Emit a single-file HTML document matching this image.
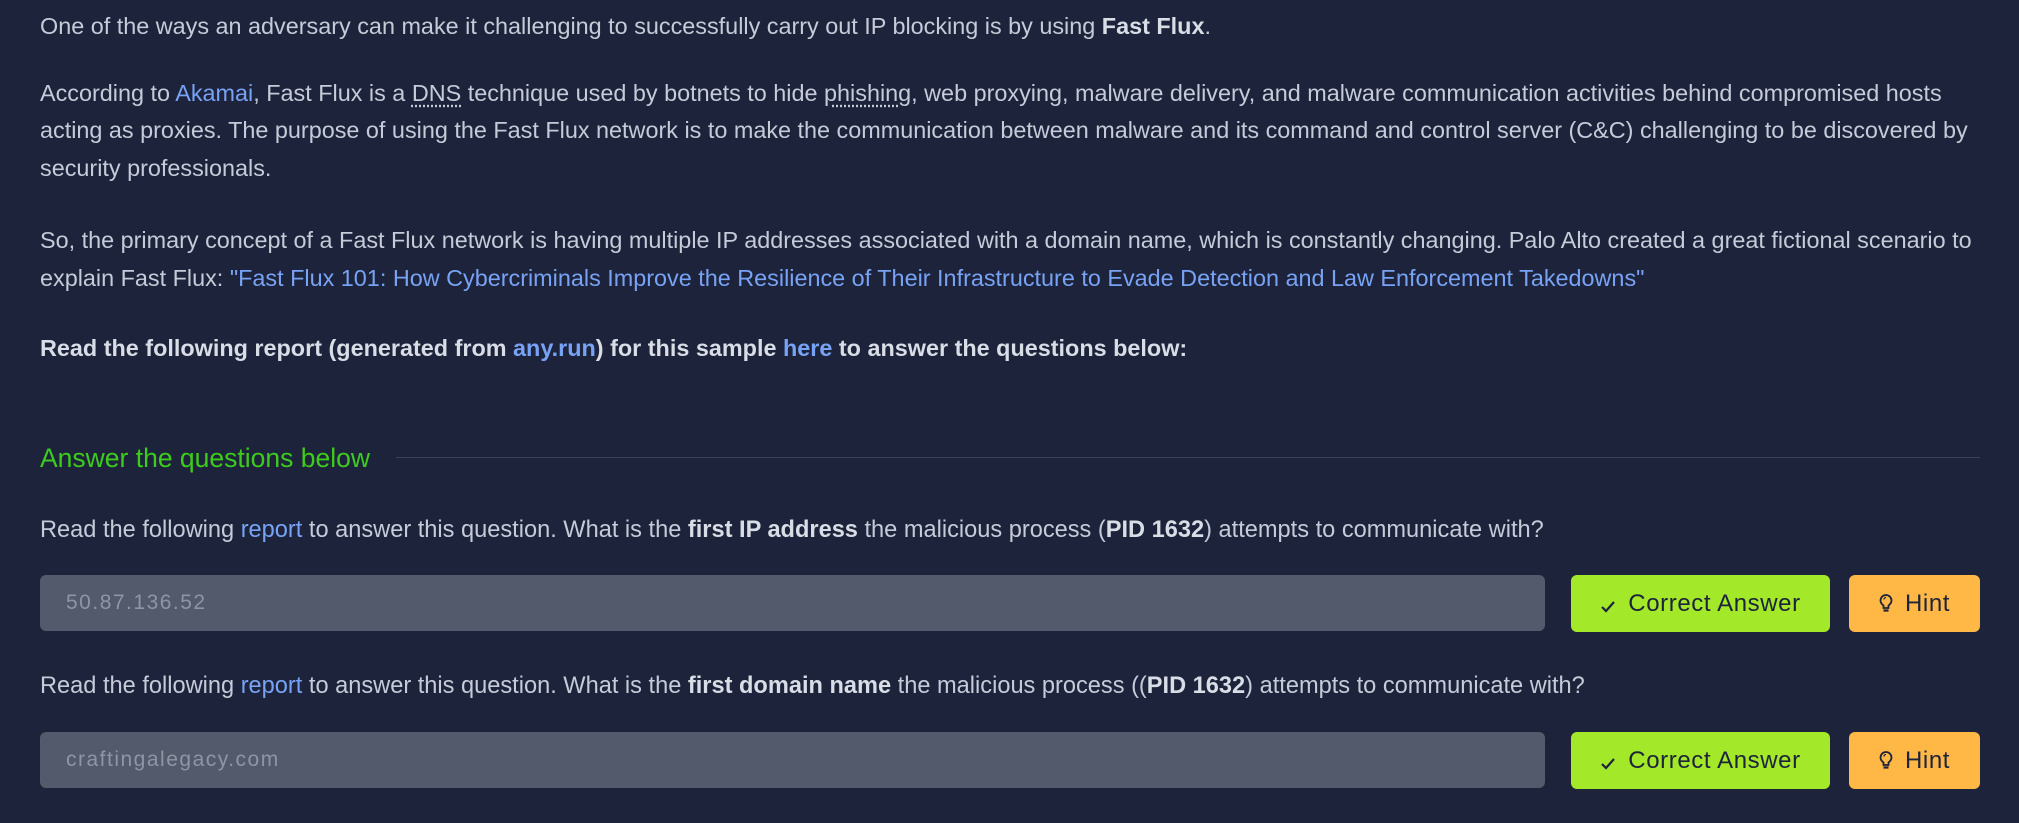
<!DOCTYPE html>
<html><head><meta charset="utf-8"><style>
html,body{margin:0;padding:0;background:#1d233a;width:2019px;height:823px;overflow:hidden}
body{font-family:"Liberation Sans",sans-serif;color:#c5cbd8;font-size:23.4px}
.l{position:absolute;left:40px;white-space:nowrap;line-height:37px;height:37px}
.q{font-size:23.6px}
a{color:#78a3f5;text-decoration:none}
b{color:#d8dde6}
.dns{text-decoration:underline dotted;text-underline-offset:4px}
.h{position:absolute;left:40px;top:440px;color:#3dcc1d;font-size:26.5px;line-height:36px}
.hr{position:absolute;left:396px;right:39px;top:457px;height:1px;background:#3a4258}
.inp{position:absolute;left:40px;width:1505px;height:56px;background:#525a6b;border-radius:6px;color:#8e96a5;font-size:21px;line-height:56px;padding-left:26px;box-sizing:border-box;letter-spacing:1.5px}
.btn{position:absolute;height:57px;border-radius:6px;color:#1d233a;font-size:24px;line-height:57px;text-align:center;letter-spacing:0.6px}
.btn svg{vertical-align:-3px;margin-right:12px}
.ca{left:1571px;width:259px;background:#a3e92a}
.hi{left:1849px;width:131px;background:#ffb845}
</style></head><body>
<div class="l" style="top:8px">One of the ways an adversary can make it challenging to successfully carry out IP blocking is by using <b>Fast Flux</b>.</div>
<div class="l" style="top:75px">According to <a>Akamai</a>, Fast Flux is a <span class="dns">DNS</span> technique used by botnets to hide <span class="dns">phishing</span>, web proxying, malware delivery, and malware communication activities behind compromised hosts</div>
<div class="l" style="top:112px">acting as proxies. The purpose of using the Fast Flux network is to make the communication between malware and its command and control server (C&amp;C) challenging to be discovered by</div>
<div class="l" style="top:150px">security professionals.</div>
<div class="l" style="top:222px">So, the primary concept of a Fast Flux network is having multiple IP addresses associated with a domain name, which is constantly changing. Palo Alto created a great fictional scenario to</div>
<div class="l" style="top:260px">explain Fast Flux: <a>"Fast Flux 101: How Cybercriminals Improve the Resilience of Their Infrastructure to Evade Detection and Law Enforcement Takedowns"</a></div>
<div class="l" style="top:330px"><b>Read the following report (generated from <a>any.run</a>) for this sample <a>here</a> to answer the questions below:</b></div>
<div class="h">Answer the questions below</div>
<div class="hr"></div>
<div class="l q" style="top:512px">Read the following <a>report</a> to answer this question. What is the <b>first IP address</b> the malicious process (<b>PID 1632</b>) attempts to communicate with?</div>
<div class="inp" style="top:575px">50.87.136.52</div>
<div class="btn ca" style="top:575px"><svg width="16" height="14" viewBox="0 0 16 14"><path d="M2 7l4 4 8-9" fill="none" stroke="#1d233a" stroke-width="2.2"/></svg>Correct Answer</div>
<div class="btn hi" style="top:575px"><svg width="14" height="20" viewBox="0 0 14 20"><path d="M4.5 14v-2.5C2.5 10 1.5 8.5 1.5 6.5a5.5 5.5 0 0 1 11 0c0 2-1 3.5-3 5V14z" fill="none" stroke="#1d233a" stroke-width="1.8"/><path d="M4.5 16.5h5" stroke="#1d233a" stroke-width="2.2"/><path d="M5 5.5a2 2 0 0 1 2-2" fill="none" stroke="#1d233a" stroke-width="1.3"/></svg>Hint</div>
<div class="l q" style="top:668px">Read the following <a>report</a> to answer this question. What is the <b>first domain name</b> the malicious process ((<b>PID 1632</b>) attempts to communicate with?</div>
<div class="inp" style="top:732px">craftingalegacy.com</div>
<div class="btn ca" style="top:732px"><svg width="16" height="14" viewBox="0 0 16 14"><path d="M2 7l4 4 8-9" fill="none" stroke="#1d233a" stroke-width="2.2"/></svg>Correct Answer</div>
<div class="btn hi" style="top:732px"><svg width="14" height="20" viewBox="0 0 14 20"><path d="M4.5 14v-2.5C2.5 10 1.5 8.5 1.5 6.5a5.5 5.5 0 0 1 11 0c0 2-1 3.5-3 5V14z" fill="none" stroke="#1d233a" stroke-width="1.8"/><path d="M4.5 16.5h5" stroke="#1d233a" stroke-width="2.2"/><path d="M5 5.5a2 2 0 0 1 2-2" fill="none" stroke="#1d233a" stroke-width="1.3"/></svg>Hint</div>
</body></html>
